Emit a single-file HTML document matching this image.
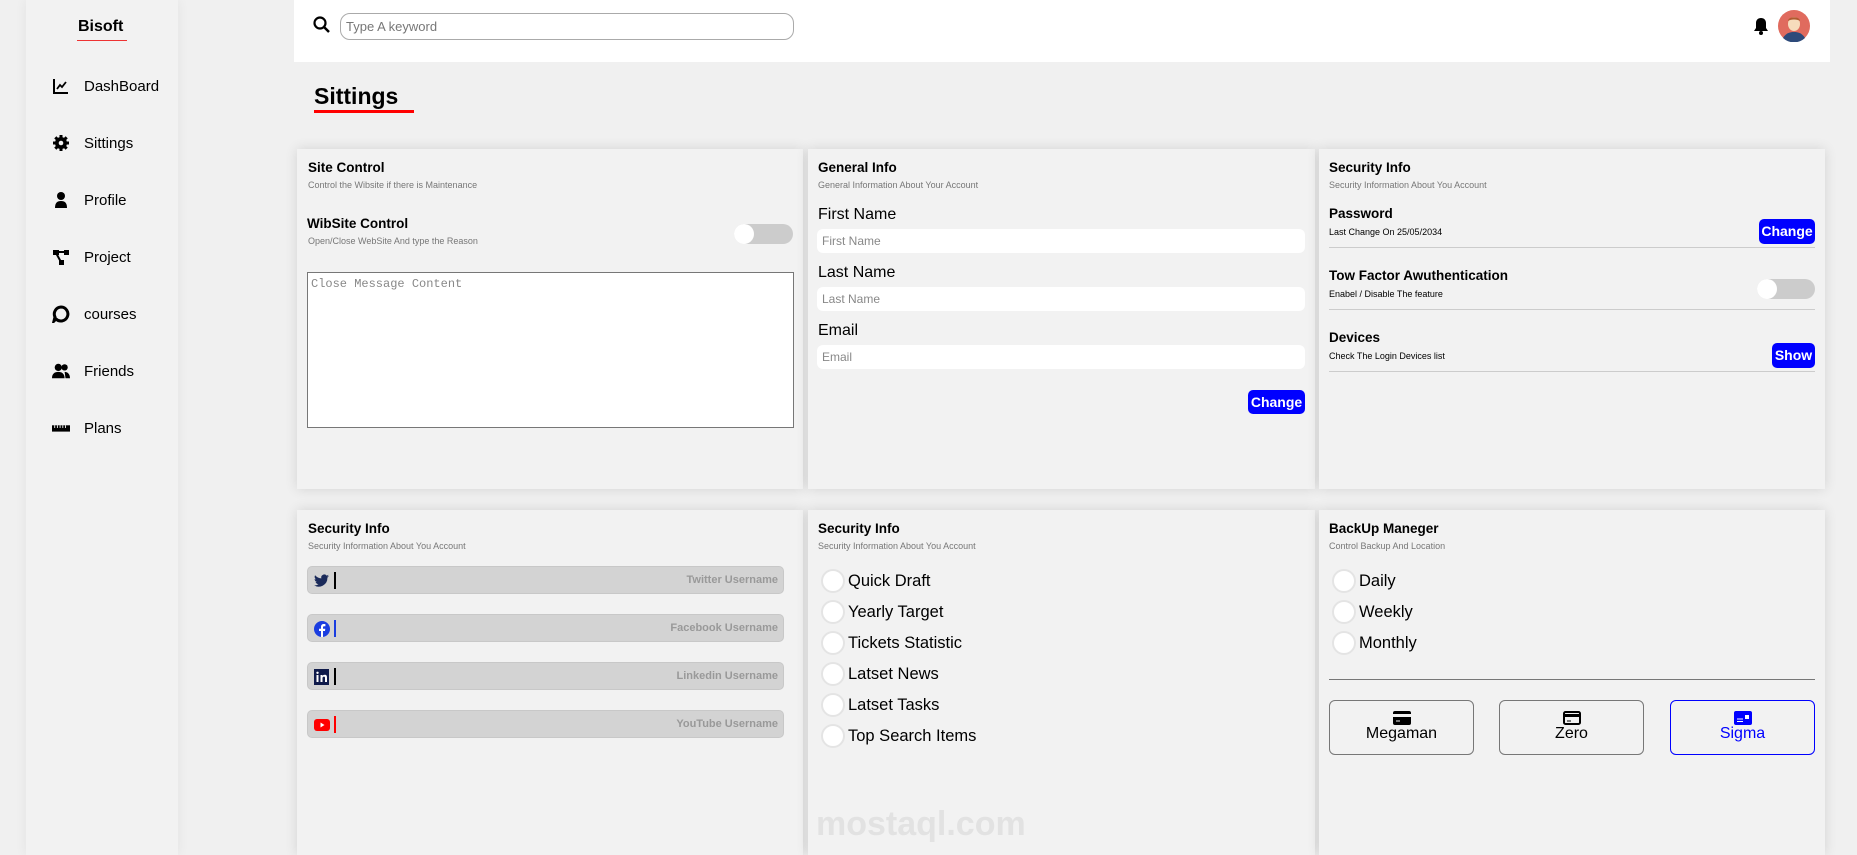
<!DOCTYPE html>
<html><head><meta charset="utf-8"><style>
*{box-sizing:border-box;margin:0;padding:0}
body{width:1857px;height:855px;background:#f0f0f0;font-family:"Liberation Sans",Arial,sans-serif;position:relative;overflow:hidden;color:#000}
.a{position:absolute}
.side{left:26px;top:0;width:152px;height:855px;background:#f2f2f2;box-shadow:0 0 12px rgba(0,0,0,.06)}
.nav{position:absolute;left:26px;font-size:15px;display:flex;align-items:center}
.nav svg{width:18px;height:18px;margin-right:14px}
.card{position:absolute;background:#f2f2f2;box-shadow:0 0 12px rgba(0,0,0,.12)}
.t{position:absolute;font-weight:bold;font-size:13.5px}
.s{position:absolute;font-size:9px;color:#777}
.lbl{position:absolute;font-size:16px}
.inp{position:absolute;background:#fff;border-radius:6px;font-size:12px;color:#888;padding:5px 5px}
.btn{position:absolute;background:#0000ff;color:#fff;font-weight:bold;font-size:14px;border-radius:5px;text-align:center;line-height:25px}
.tog{position:absolute;width:59px;height:20px;background:#ccc;border-radius:10px}
.tog:before{content:"";position:absolute;left:0;top:0;width:20px;height:20px;border-radius:50%;background:#fff}
.line{position:absolute;height:1px;background:#ccc}
.soc{position:absolute;left:10px;width:477px;height:28px;background:#d3d3d3;border:1px solid #c8c8c8;border-radius:5px}
.soc span{position:absolute;right:5px;top:7px;font-size:11px;font-weight:bold;color:#999}
.soc i{position:absolute;left:26px;top:5px;width:2px;height:17px}
.soc svg{position:absolute;left:6px;top:6px;width:16px;height:16px}
.r{position:absolute;font-size:16.5px;display:flex;align-items:center}
.r b{display:inline-block;width:24px;height:24px;border-radius:50%;background:#fff;border:2px solid #e4e4e4;margin-right:3px}
.pb{position:absolute;top:700px;width:145px;height:55px;border:1px solid #777;border-radius:6px;text-align:center;font-size:16px}
.pb svg{display:block;margin:10px auto 0;width:18px;height:14px}
</style></head><body>
<div class="a side">
 <div class="a" style="left:52px;top:18px;font-weight:bold;font-size:16px">Bisoft</div>
 <div class="a" style="left:51px;top:40px;width:50px;height:1px;background:#e33"></div>
 <div class="nav" style="top:77px"><svg viewBox="0 0 18 18"><path d="M2 2V16H16" stroke="#000" stroke-width="2" fill="none"/><path d="M5 12L8 8L10 10L14 5" stroke="#000" stroke-width="1.8" fill="none"/></svg>DashBoard</div>
 <div class="nav" style="top:134px"><svg viewBox="0 0 18 18"><circle cx="9" cy="9" r="6" fill="#000"/><path d="M9 1v16M1 9h16M3.3 3.3l11.4 11.4M14.7 3.3L3.3 14.7" stroke="#000" stroke-width="3"/><circle cx="9" cy="9" r="2.3" fill="#f2f2f2"/></svg>Sittings</div>
 <div class="nav" style="top:191px"><svg viewBox="0 0 18 18"><circle cx="9" cy="5" r="4" fill="#000"/><path d="M3 17c0-5 2-7 6-7s6 2 6 7z" fill="#000"/></svg>Profile</div>
 <div class="nav" style="top:248px"><svg viewBox="0 0 18 18"><rect x="1" y="2" width="6" height="5" fill="#000"/><rect x="12" y="2" width="5" height="5" fill="#000"/><rect x="7" y="12" width="5" height="5" fill="#000"/><path d="M4 5L9 14M7 4h6" stroke="#000" stroke-width="2"/></svg>Project</div>
 <div class="nav" style="top:305px"><svg viewBox="0 0 18 18"><path d="M9 2a7 7 0 1 1-5 12l-2 2 1-4A7 7 0 0 1 9 2z" fill="none" stroke="#000" stroke-width="3"/></svg>courses</div>
 <div class="nav" style="top:362px"><svg viewBox="0 0 20 18"><circle cx="7" cy="5" r="4" fill="#000"/><circle cx="14" cy="5" r="3.5" fill="#000"/><path d="M0 17c0-5 3-7 7-7s7 2 7 7z M14 10c3 0 6 2 6 7h-5z" fill="#000"/></svg>Friends</div>
 <div class="nav" style="top:419px"><svg viewBox="0 0 20 18"><rect x="0" y="6" width="20" height="7" fill="#000"/><path d="M3 6v3M6 6v3M9 6v3M12 6v3M15 6v3" stroke="#f2f2f2" stroke-width="1"/></svg>Plans</div>
</div>
<div class="a" style="left:294px;top:0;width:1536px;height:62px;background:#fff"></div>
<svg class="a" style="left:313px;top:16px" width="17" height="17" viewBox="0 0 17 17"><circle cx="7" cy="7" r="5.5" stroke="#000" stroke-width="2.2" fill="none"/><path d="M11 11l5 5" stroke="#000" stroke-width="2.5"/></svg>
<div class="a" style="left:340px;top:13px;width:454px;height:27px;border:1px solid #aaa;border-radius:10px;font-size:13px;color:#777;padding:5px 5px">Type A keyword</div>
<svg class="a" style="left:1753px;top:17px" width="16" height="18" viewBox="0 0 16 18"><path d="M8 1c-3 0-5 2-5 5v5l-2 3h14l-2-3V6c0-3-2-5-5-5z" fill="#000"/><circle cx="8" cy="16" r="2" fill="#000"/></svg>
<svg class="a" style="left:1778px;top:10px" width="32" height="32" viewBox="0 0 32 32"><circle cx="16" cy="16" r="16" fill="#e06b5e"/><path d="M5 28c3-5 7-6 11-6s8 1 11 6a16 16 0 0 1-22 0z" fill="#2d4a7a"/><ellipse cx="16" cy="14" rx="6" ry="7" fill="#f6dcbc"/><path d="M10 11c0-5 12-5 12 0c-3-2-9-2-12 0z" fill="#b05a30"/></svg>
<div class="a" style="left:314px;top:83px;font-size:23px;font-weight:bold">Sittings</div>
<div class="a" style="left:314px;top:110px;width:100px;height:3px;background:#f00"></div>

<div class="card" style="left:297px;top:149px;width:506px;height:340px">
 <div class="t" style="left:11px;top:11px">Site Control</div>
 <div class="s" style="left:11px;top:31px">Control the Wibsite if there is Maintenance</div>
 <div class="t" style="left:10px;top:67px">WibSite Control</div>
 <div class="s" style="left:11px;top:87px">Open/Close WebSite And type the Reason</div>
 <div class="tog" style="left:437px;top:75px"></div>
 <div class="a" style="left:10px;top:123px;width:487px;height:156px;background:#fff;border:1px solid #777;font-family:'Liberation Mono',monospace;font-size:12px;color:#888;padding:4px 3px">Close Message Content</div>
</div>
<div class="card" style="left:808px;top:149px;width:507px;height:340px">
 <div class="t" style="left:10px;top:11px">General Info</div>
 <div class="s" style="left:10px;top:31px">General Information About Your Account</div>
 <div class="lbl" style="left:10px;top:57px">First Name</div>
 <div class="inp" style="left:9px;top:80px;width:488px;height:24px">First Name</div>
 <div class="lbl" style="left:10px;top:115px">Last Name</div>
 <div class="inp" style="left:9px;top:138px;width:488px;height:24px">Last Name</div>
 <div class="lbl" style="left:10px;top:173px">Email</div>
 <div class="inp" style="left:9px;top:196px;width:488px;height:24px">Email</div>
 <div class="btn" style="left:440px;top:241px;width:57px;height:24px">Change</div>
</div>
<div class="card" style="left:1319px;top:149px;width:506px;height:340px">
 <div class="t" style="left:10px;top:11px">Security Info</div>
 <div class="s" style="left:10px;top:31px">Security Information About You Account</div>
 <div class="t" style="left:10px;top:57px">Password</div>
 <div class="s" style="left:10px;top:78px;color:#000">Last Change On 25/05/2034</div>
 <div class="btn" style="left:440px;top:70px;width:56px;height:25px">Change</div>
 <div class="line" style="left:10px;top:98px;width:486px"></div>
 <div class="t" style="left:10px;top:119px">Tow Factor Awuthentication</div>
 <div class="s" style="left:10px;top:140px;color:#000">Enabel / Disable The feature</div>
 <div class="tog" style="left:438px;top:130px;width:58px"></div>
 <div class="line" style="left:10px;top:160px;width:486px"></div>
 <div class="t" style="left:10px;top:181px">Devices</div>
 <div class="s" style="left:10px;top:202px;color:#000">Check The Login Devices list</div>
 <div class="btn" style="left:453px;top:194px;width:43px;height:25px">Show</div>
 <div class="line" style="left:10px;top:222px;width:486px"></div>
</div>

<div class="card" style="left:297px;top:510px;width:506px;height:345px">
 <div class="t" style="left:11px;top:11px">Security Info</div>
 <div class="s" style="left:11px;top:31px">Security Information About You Account</div>
 <div class="soc" style="top:56px"><svg viewBox="0 0 16 16"><path d="M15 3c-.6.3-1.2.4-1.8.5.7-.4 1.1-1 1.4-1.7-.6.4-1.3.6-2 .8A3 3 0 0 0 7.4 5.4 8.7 8.7 0 0 1 1.1 2.3 3 3 0 0 0 2 6.4c-.5 0-1-.2-1.4-.4 0 1.5 1 2.7 2.4 3-.5.1-.9.1-1.4 0 .4 1.2 1.5 2.1 2.9 2.1A6 6 0 0 1 0 12.3 8.7 8.7 0 0 0 13.4 5v-.4c.6-.4 1.1-1 1.6-1.6z" fill="#1a2a5a"/></svg><i style="background:#000"></i><span>Twitter Username</span></div>
 <div class="soc" style="top:104px"><svg viewBox="0 0 16 16"><circle cx="8" cy="8" r="8" fill="#1a3de0"/><path d="M9 16V10h2l.3-2.3H9V6.3c0-.7.2-1.1 1.2-1.1h1.2V3.1C11 3 10.4 3 9.8 3 8.1 3 7 4 7 5.9V7.7H5V10h2v6z" fill="#fff"/></svg><i style="background:#1a3de0"></i><span>Facebook Username</span></div>
 <div class="soc" style="top:152px"><svg viewBox="0 0 16 16"><rect width="15" height="16" fill="#0f1a4a"/><rect x="2.5" y="6" width="2" height="7" fill="#fff"/><circle cx="3.5" cy="3.8" r="1.2" fill="#fff"/><path d="M6.5 6h2v1c.5-.8 1.3-1.2 2.3-1.2 1.8 0 2.2 1.2 2.2 2.8V13h-2V9c0-.8-.2-1.4-1-1.4s-1.5.6-1.5 1.5V13h-2z" fill="#fff"/></svg><i style="background:#000"></i><span>Linkedin Username</span></div>
 <div class="soc" style="top:200px"><svg viewBox="0 0 16 16"><rect y="2" width="16" height="12" rx="3" fill="#f00"/><path d="M6.5 5.5v5l4-2.5z" fill="#fff"/></svg><i style="background:#f00"></i><span>YouTube Username</span></div>
</div>
<div class="card" style="left:808px;top:510px;width:507px;height:345px">
 <div class="t" style="left:10px;top:11px">Security Info</div>
 <div class="s" style="left:10px;top:31px">Security Information About You Account</div>
 <div class="r" style="left:13px;top:59px"><b></b>Quick Draft</div>
 <div class="r" style="left:13px;top:90px"><b></b>Yearly Target</div>
 <div class="r" style="left:13px;top:121px"><b></b>Tickets Statistic</div>
 <div class="r" style="left:13px;top:152px"><b></b>Latset News</div>
 <div class="r" style="left:13px;top:183px"><b></b>Latset Tasks</div>
 <div class="r" style="left:13px;top:214px"><b></b>Top Search Items</div>
 <div class="a" style="left:8px;top:295px;font-size:34px;font-weight:bold;color:#e2e2e2">mostaql.com</div>
</div>
<div class="card" style="left:1319px;top:510px;width:506px;height:345px">
 <div class="t" style="left:10px;top:11px">BackUp Maneger</div>
 <div class="s" style="left:10px;top:31px">Control Backup And Location</div>
 <div class="r" style="left:13px;top:59px"><b></b>Daily</div>
 <div class="r" style="left:13px;top:90px"><b></b>Weekly</div>
 <div class="r" style="left:13px;top:121px"><b></b>Monthly</div>
 <div class="line" style="left:10px;top:169px;width:486px;background:#777"></div>
</div>
<div class="pb" style="left:1329px"><svg viewBox="0 0 18 14"><rect width="18" height="14" rx="2" fill="#000"/><rect y="3" width="18" height="3" fill="#f2f2f2"/><path d="M3 10h4" stroke="#f2f2f2"/></svg>Megaman</div>
<div class="pb" style="left:1499px"><svg viewBox="0 0 18 14"><rect x="1" y="1" width="16" height="12" rx="1.5" fill="none" stroke="#000" stroke-width="2"/><rect y="3" width="18" height="3" fill="#000"/><path d="M4 10h4" stroke="#000"/></svg>Zero</div>
<div class="pb" style="left:1670px;border-color:#00f;color:#00f"><svg viewBox="0 0 18 14"><rect width="18" height="14" rx="2" fill="#00f"/><path d="M3 8h6M3 10.5h6" stroke="#fff"/><rect x="11" y="4" width="4" height="4" fill="#fff"/></svg>Sigma</div>
</body></html>
